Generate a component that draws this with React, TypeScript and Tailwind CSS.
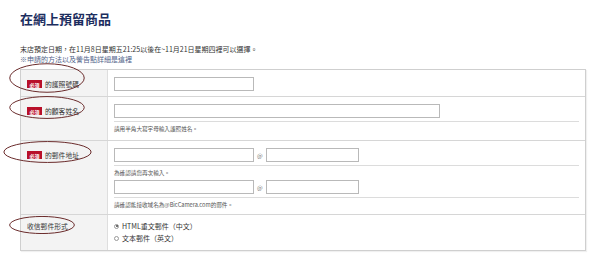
const note = 'text-[5.6px] leading-[8px] text-[#555]';

function Badge() {
  return (
    <span className="mr-[3px] inline-flex h-[8px] w-[15px] items-center justify-center bg-[#b8102a] text-[5px] leading-none font-bold text-white">
      必須
    </span>
  );
}

function Input({ w }: { w: string }) {
  return <div className={`h-[14px] ${w} border border-[#b9b9b9] bg-white`} />;
}

function Sep() {
  return <div className="mt-[3px] h-px w-full bg-[#dcdcdc]" />;
}

function Row({
  label,
  required = true,
  h,
  labelPt = 'pt-[8px]',
  last = false,
  children,
}: {
  label: string;
  required?: boolean;
  h: string;
  labelPt?: string;
  last?: boolean;
  children: React.ReactNode;
}) {
  return (
    <div className={`flex ${h} ${last ? '' : 'border-b border-[#d6d6d6]'}`}>
      <div className={`w-[87px] shrink-0 border-r border-[#dedede] bg-[#f3f3f3] pl-[6px] ${labelPt}`}>
        <div className="flex h-[12px] items-center text-[6.8px] text-[#333]">
          {required && <Badge />}
          {label}
        </div>
      </div>
      <div className="flex-1 px-[6px] pt-[7px]">{children}</div>
    </div>
  );
}

function Radio({ checked, label }: { checked?: boolean; label: string }) {
  return (
    <div className="flex h-[12px] items-center gap-[3px] text-[7px] text-[#333]">
      <span className="flex h-[5px] w-[5px] items-center justify-center rounded-full border border-[#999] bg-white">
        {checked && <span className="h-[2px] w-[2px] rounded-full bg-[#444]" />}
      </span>
      {label}
    </div>
  );
}

function Ellipse({ className }: { className: string }) {
  return (
    <svg className={`absolute ${className}`} viewBox="0 0 100 40" preserveAspectRatio="none">
      <ellipse cx="50" cy="20" rx="49" ry="19" fill="none" stroke="#6a2b2b" strokeWidth="1" vectorEffect="non-scaling-stroke" />
    </svg>
  );
}

export default function App() {
  return (
    <div className="relative h-[264px] w-[600px] overflow-hidden bg-white font-['Noto_Sans_CJK_TC','Noto_Sans',sans-serif]">
      <div className="pl-[20px] pt-[10px]">
        <h1 className="text-[13px] leading-[18px] font-bold text-[#1b2d5e]">在網上預留商品</h1>
        <p className="mt-[16px] text-[7px] leading-[10px] text-[#333]">
          末店預定日期，在11月8日星期五21:25以後在~11月21日星期四裡可以選擇。
        </p>
        <p className="text-[7px] leading-[10px] text-[#4f6288]">※申請的方法以及警告點詳細是這裡</p>

        <div className="mt-[5px] w-[566px] border border-[#cfcfcf] shadow-[1px_1px_1px_rgba(0,0,0,0.06)]">
          <Row label="的護照號碼" h="h-[27px]">
            <Input w="w-[140px]" />
          </Row>

          <Row label="的顧客姓名" h="h-[44px]">
            <Input w="w-[326px]" />
            <Sep />
            <p className={`mt-[3px] ${note}`}>請用半角大寫字母輸入護照姓名。</p>
          </Row>

          <Row label="的郵件地址" h="h-[74px]">
            <div className="flex items-center">
              <Input w="w-[140px]" />
              <span className="mx-[3px] text-[6px] text-[#777]">@</span>
              <Input w="w-[93px]" />
            </div>
            <Sep />
            <p className={`mt-[3px] ${note}`}>為確認請您再次輸入。</p>
            <div className="mt-[3px] flex items-center">
              <Input w="w-[140px]" />
              <span className="mx-[3px] text-[6px] text-[#777]">@</span>
              <Input w="w-[93px]" />
            </div>
            <Sep />
            <p className={`mt-[3px] ${note}`}>請確認能接收域名為@BicCamera.com的郵件。</p>
          </Row>

          <Row label="收信郵件形式" required={false} h="h-[35px]" labelPt="pt-[5px]" last>
            <div className="-mt-[2px]">
              <Radio checked label="HTML重文郵件（中文）" />
              <Radio label="文本郵件（英文）" />
            </div>
          </Row>
        </div>
      </div>

      <Ellipse className="left-[9px] top-[63px] h-[30px] w-[76px]" />
      <Ellipse className="left-[9px] top-[96px] h-[23px] w-[76px]" />
      <Ellipse className="left-[3px] top-[141px] h-[22px] w-[89px]" />
      <Ellipse className="left-[9px] top-[216px] h-[18px] w-[66px]" />
    </div>
  );
}
